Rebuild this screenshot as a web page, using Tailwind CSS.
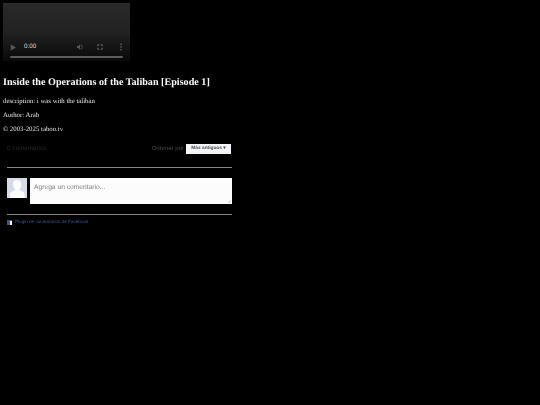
<!DOCTYPE html>
<html lang="en">
<head>
  <meta charset="UTF-8" />
  <title>Inside the Operations of the Taliban</title>
  <script src="https://cdn.jsdelivr.net/npm/@tailwindcss/browser@4"></script>
</head>
<body class="bg-black text-white min-h-screen font-['Liberation_Serif',serif] overflow-hidden antialiased [text-rendering:geometricPrecision]">
  <main class="pt-[3px] pl-[3px] opacity-[.99] blur-[0.3px]">
    <div class="w-[127px] h-[58px] bg-gradient-to-b from-[#2a2a2a] via-[#232323] to-[#0a0a0a] flex flex-col justify-end px-[7px] pb-[3px]">
      <div class="flex items-center h-[12px]">
        <svg class="w-[6px] h-[7px]" viewBox="0 0 8 8" fill="#5a5a5a"><path d="M1 0l7 4-7 4z" /></svg>
        <span class="ml-[8px] w-[12px] text-[6.300px] text-[#ddd] font-['Liberation_Sans',sans-serif]">0:00</span>
        <svg class="w-[8px] h-[8px] ml-[40px]" viewBox="0 0 24 24" fill="#5a5a5a"><path d="M3 9v6h4l5 5V4L7 9zM14 4v2.500a6 6 0 010 11V20a8.500 8.500 0 000-16z" /></svg>
        <svg class="w-[6px] h-[6px] ml-[13px]" viewBox="0 0 24 24" fill="none" stroke="#888" stroke-width="3"><path d="M3 9V3h6M15 3h6v6M21 15v6h-6M9 21H3v-6" /></svg>
        <svg class="w-[4px] h-[8px] ml-[16px]" viewBox="0 0 6 16" fill="#777"><circle cx="3" cy="2.500" r="1.500" /><circle cx="3" cy="8" r="1.500" /><circle cx="3" cy="13.500" r="1.500" /></svg>
      </div>
      <div class="h-[2px] bg-[#5e5e5e] mt-[3px] rounded-full"></div>
    </div>

    <h1 class="mt-[15px] text-[10.150px] leading-[14px] font-bold">Inside the Operations of the Taliban [Episode 1]</h1>
    <p class="mt-[7px] text-[6.800px] leading-[10px] text-[#e5e5e5]">description: i was with the taliban</p>
    <p class="mt-[4px] text-[6.800px] leading-[10px] text-[#e5e5e5]">Author: Arab</p>
    <p class="mt-[4px] text-[6.800px] leading-[10px] text-[#e5e5e5]">© 2003-2025 taboo.tv</p>

    <section class="w-[225px] ml-[4px] mt-[7px] font-['Liberation_Sans',sans-serif]">
      <div class="flex items-center justify-between h-[14px]">
        <span class="text-[6.300px] text-[#2a2a2a]">0 comentarios</span>
        <div class="flex items-center gap-[2px]">
          <span class="text-[6px] text-[#4b4b4b]">Ordenar por</span>
          <span class="bg-[#f6f7f9] text-[#4b4f56] text-[4.800px] font-bold w-[45px] h-[10px] mr-px flex items-center justify-center">Más antiguos ▾</span>
        </div>
      </div>
      <div class="h-px bg-[#888] mt-[11px]"></div>
      <div class="flex gap-[3px] mt-[10px]">
        <div class="w-[20px] h-[20px] bg-[#d8dfea] overflow-hidden">
          <svg viewBox="0 0 20 20" class="w-full h-full"><path fill="#fff" d="M10 2c3 0 4.700 2.300 4.300 5-.3 2.200-1.100 3.500-1.700 4.300-.2.800.2 1.300 1.500 1.800 1.700.7 3 1.300 3.400 2.400V20H3v-4.500c.4-1.100 1.700-1.700 3.400-2.400 1.300-.5 1.700-1 1.500-1.800-.6-.8-1.400-2.100-1.700-4.300C5.300 4.300 7 2 10 2z" /></svg>
        </div>
        <div class="relative flex-1 h-[26px] bg-white px-[4px] py-[5px] text-[6.700px] text-[#808080]">
          Agrega un comentario...
          <svg class="absolute right-[1px] bottom-[1px] w-[3px] h-[3px]" viewBox="0 0 4 4" stroke="#999" stroke-width=".6"><path d="M0 4l4-4M2 4l2-2" /></svg>
        </div>
      </div>
      <div class="h-px bg-[#888] mt-[10px]"></div>
      <div class="flex items-center gap-[3px] mt-[4px]">
        <span class="w-[5px] h-[5px] bg-[#3b5998] flex items-end justify-end">
          <span class="w-[2px] h-[4px] bg-white"></span>
        </span>
        <span class="text-[4.600px] text-[#3b5998]">Plugin de comentarios de Facebook</span>
      </div>
    </section>
  </main>
</body>
</html>
